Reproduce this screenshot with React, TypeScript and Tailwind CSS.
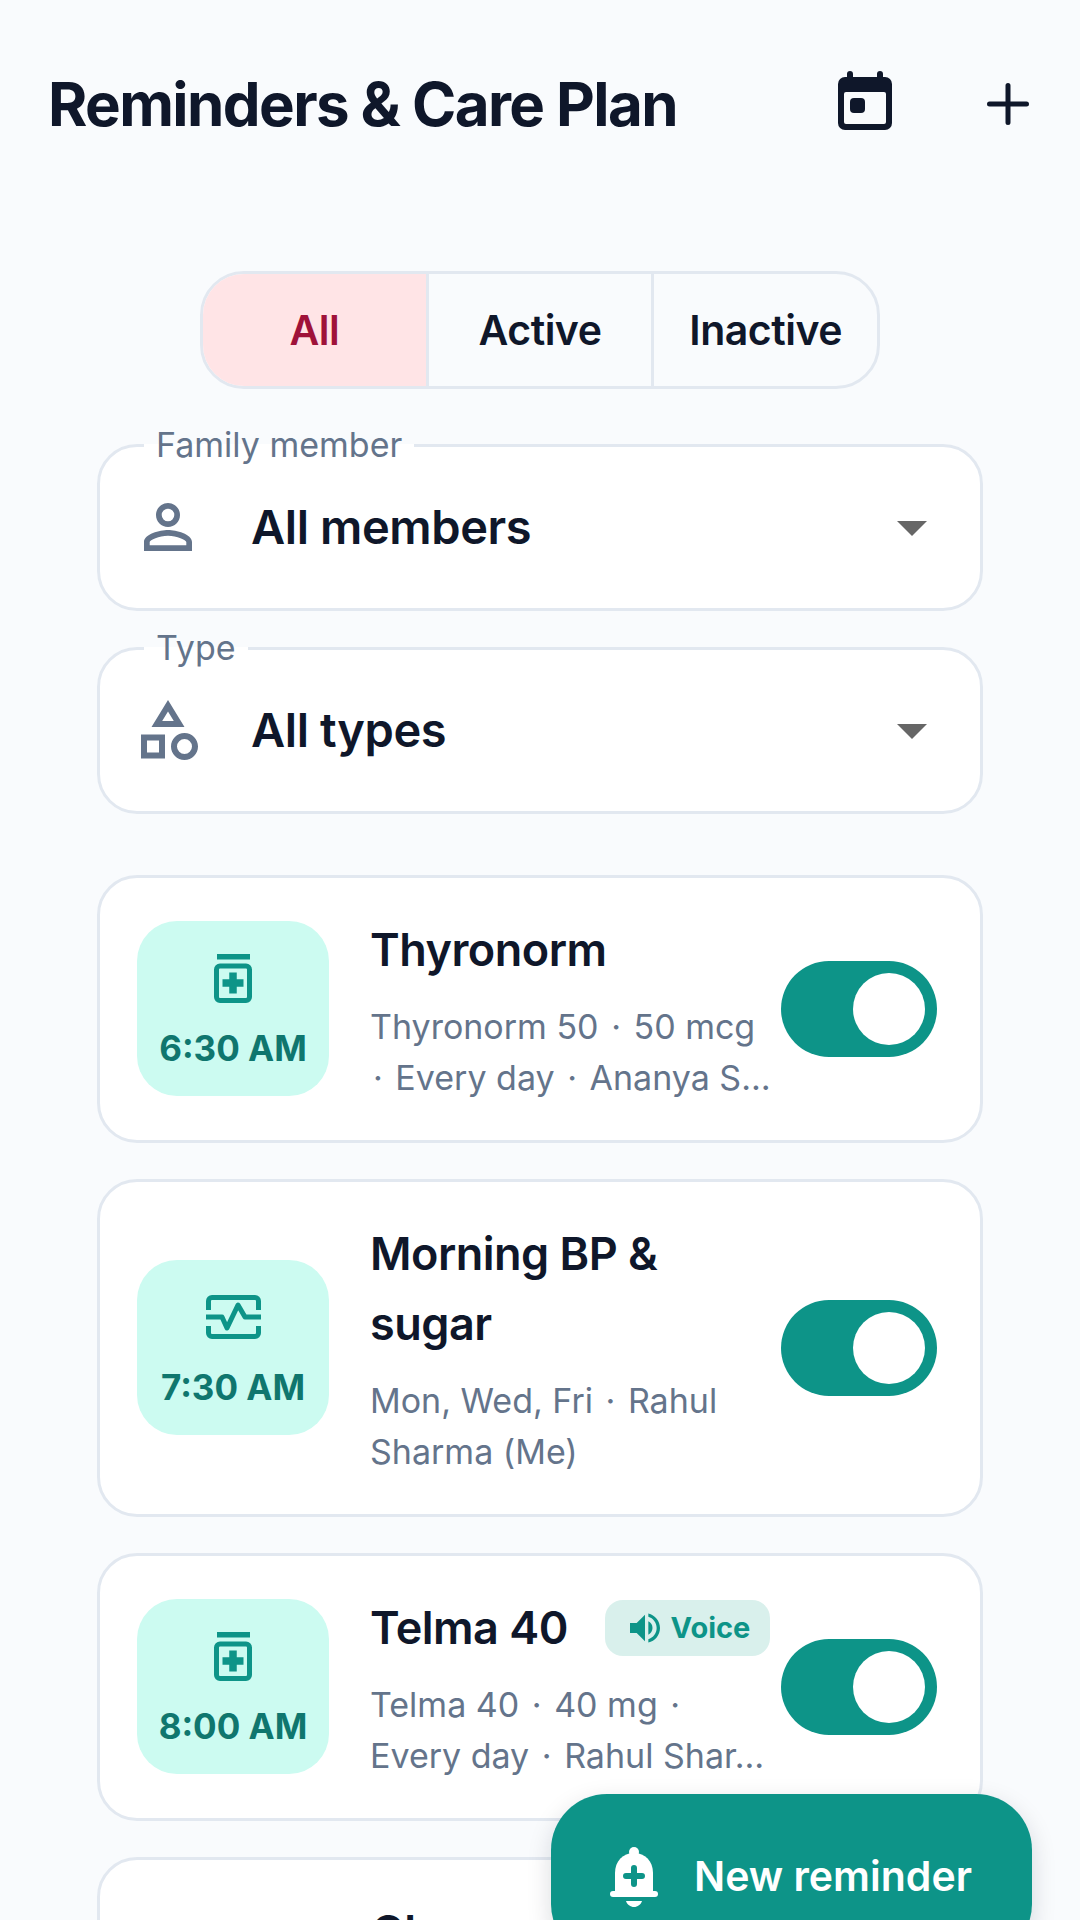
import { MdPersonOutline, MdOutlineCategory, MdArrowDropDown, MdVolumeUp } from 'react-icons/md';

const font = { fontFamily: 'Inter, "Noto Sans", sans-serif' };

const CalendarIcon = () => (
  <svg width="54" height="59" viewBox="0 0 54 59" fill="none">
    <path d="M12 8V3M42 8V3" stroke="#0f172a" strokeWidth="6" strokeLinecap="round" />
    <rect x="0" y="6" width="54" height="53" rx="7" fill="#0f172a" />
    <rect x="6" y="21" width="42" height="32" rx="2" fill="#f9fbfd" />
    <rect x="12" y="27" width="15" height="15" rx="4" fill="#0f172a" />
  </svg>
);

const PlusIcon = () => (
  <svg width="42" height="42" viewBox="0 0 42 42" fill="none">
    <path d="M21 2.5v37M2.5 21h37" stroke="#0f172a" strokeWidth="5" strokeLinecap="round" />
  </svg>
);

const BottleIcon = () => (
  <svg width="38" height="49" viewBox="0 0 38 49" fill="none">
    <rect x="3" y="0" width="33" height="5.5" fill="#0d9488" />
    <rect x="2.5" y="12" width="33" height="34.5" rx="3.5" stroke="#0d9488" strokeWidth="5" />
    <path d="M19 18.5v21M8.5 29h21" stroke="#0d9488" strokeWidth="7.5" />
  </svg>
);

const PulseIcon = () => (
  <svg width="55" height="44" viewBox="0 0 55 44" fill="none" stroke="#0d9488" strokeWidth="5">
    <path d="M2.5 15V6a3.5 3.5 0 0 1 3.5-3.5h43a3.5 3.5 0 0 1 3.5 3.5v9" />
    <path d="M0 22h16l5 11 11-23 7 12h16" strokeLinejoin="round" />
    <path d="M2.5 31v7a3.5 3.5 0 0 0 3.5 3.5h43a3.5 3.5 0 0 0 3.5-3.5v-7" />
  </svg>
);

const BellPlusIcon = () => (
  <svg width="48" height="60" viewBox="0 0 48 60" fill="none">
    <circle cx="24" cy="5" r="5" fill="#fff" />
    <path d="M5 46V26C5 14 13 6 24 6s19 8 19 20v20z" fill="#fff" />
    <rect x="0" y="44" width="48" height="6" rx="3" fill="#fff" />
    <path d="M16 54h16c-1 3.500-4.500 6-8 6s-7-2.500-8-6z" fill="#fff" />
    <path d="M24 21v16M16 29h16" stroke="#0d9488" strokeWidth="6" strokeLinecap="round" />
  </svg>
);

const Toggle = () => (
  <div className="w-[156px] h-[96px] shrink-0 -mt-[2px] rounded-full bg-[#0d9488] flex items-center justify-end pr-3">
    <div className="w-[72px] h-[72px] rounded-full bg-white" />
  </div>
);

const FilterField = ({ label, value, icon }: { label: string; value: string; icon: React.ReactNode }) => (
  <fieldset className="mx-[97px] h-[186px] border-[3px] border-[#e2e8f0] rounded-[40px] bg-white px-[44px] flex items-center">
    <legend className="px-3 text-[34px] leading-[40px] text-[#64748b]">{label}</legend>
    <div className="w-full flex items-center h-[164px] pb-[40px]">
      <span className="w-[72px] ml-[-12px] text-[#64748b] shrink-0">{icon}</span>
      <span className="ml-[47px] flex-1 text-[47px] font-semibold text-[#0f172a] tracking-[-0.4px]">{value}</span>
      <MdArrowDropDown size={72} className="text-[#666666] mr-[-12px]" />
    </div>
  </fieldset>
);

// the separators sit a little further out than a plain space gives
const SubLine = ({ text }: { text: string }) => (
  <div>
    {text.split('·').map((part, i) => (
      <span key={i}>
        {i > 0 && <span className="mx-[3px]">·</span>}
        {part}
      </span>
    ))}
  </div>
);

const reminders = [
  {
    time: '6:30 AM',
    icon: <BottleIcon />,
    title: ['Thyronorm'],
    lines: ['Thyronorm 50 · 50 mcg', '· Every day · Ananya S…'],
  },
  {
    time: '7:30 AM',
    icon: <PulseIcon />,
    title: ['Morning BP &', 'sugar'],
    lines: ['Mon, Wed, Fri · Rahul', 'Sharma (Me)'],
  },
  {
    time: '8:00 AM',
    icon: <BottleIcon />,
    title: ['Telma 40'],
    voice: true,
    lines: ['Telma 40 · 40 mg ·', 'Every day · Rahul Shar…'],
  },
];

export default function App() {
  return (
    <div style={font} className="relative h-[1920px] w-[1080px] overflow-hidden bg-[#f9fbfd]">
      <header className="flex items-center h-[72px] mt-[69px] pl-[48px]">
        <h1 className="flex-1 pb-[2px] text-[60px] font-bold tracking-[-1.6px] text-[#0f172a]">Reminders &amp; Care Plan</h1>
        <button className="mr-[95px] mb-[10px]"><CalendarIcon /></button>
        <button className="mr-[51px] mb-[2px]"><PlusIcon /></button>
      </header>

      <div className="mt-[130px] mx-auto flex w-[680px] h-[118px] rounded-[44px] border-[3px] border-[#e2e8f0] overflow-hidden text-[41px] font-semibold text-[#0f172a] tracking-[-0.5px]">
        <div className="flex-1 flex items-center justify-center pt-[2px] bg-[#ffe4e6] text-[#9f1239]">All</div>
        <div className="flex-1 flex items-center justify-center pt-[2px] border-l-[3px] border-[#e2e8f0]">Active</div>
        <div className="flex-1 flex items-center justify-center pt-[2px] border-l-[3px] border-[#e2e8f0]">Inactive</div>
      </div>

      <div className="mt-[36px] flex flex-col gap-[17px]">
        <FilterField label="Family member" value="All members" icon={<MdPersonOutline size={72} />} />
        <FilterField label="Type" value="All types" icon={<MdOutlineCategory size={72} />} />
      </div>

      <div className="mt-[61px] mx-[97px] flex flex-col gap-[36px]">
        {reminders.map((r) => (
          <div key={r.time} className="flex items-center border-[3px] border-[#e2e8f0] rounded-[40px] bg-white pl-[37px] pr-[43px] pt-[39px] pb-[37px]">
            <div className="w-[192px] h-[175px] shrink-0 -mt-[3px] rounded-[40px] bg-[#ccfbf1] flex flex-col items-center pt-[32px] gap-[23px]">
              <div className="h-[50px] flex items-center">{r.icon}</div>
              <div className="text-[35px] leading-[44px] font-bold text-[#0f766e]">{r.time}</div>
            </div>
            <div className="ml-[41px] w-[410px] shrink-0">
              <div className="-mt-[2px] flex items-center text-[45px] leading-[70px] font-semibold text-[#0f172a] tracking-[-0.5px]">
                <div>
                  {r.title.map((t) => <div key={t}>{t}</div>)}
                </div>
                {r.voice && (
                  <span className="ml-[37px] h-[56px] w-[165px] rounded-[18px] bg-[#d9f0ec] flex items-center justify-center gap-[6px] text-[29px] font-bold text-[#0d9488] tracking-normal">
                    <MdVolumeUp size={40} />
                    Voice
                  </span>
                )}
              </div>
              <div className="mt-[16px] text-[34px] leading-[51px] text-[#64748b] whitespace-nowrap">
                {r.lines.map((l) => <SubLine key={l} text={l} />)}
              </div>
            </div>
            <div className="flex-1" />
            <Toggle />
          </div>
        ))}
        <div className="border-[3px] border-[#e2e8f0] rounded-[40px] bg-white pl-[271px] pt-[37px] pb-[38px]">
          <div className="text-[45px] leading-[70px] font-semibold text-[#0f172a] tracking-[-0.5px]">Glucose check</div>
        </div>
      </div>

      <button className="absolute left-[551px] top-[1794px] w-[481px] h-[166px] rounded-[56px] bg-[#0d9488] shadow-[0_8px_24px_rgba(15,23,42,0.15)] flex items-center pl-[59px] gap-[36px] text-[41px] font-semibold text-white">
        <BellPlusIcon />
        New reminder
      </button>
    </div>
  );
}
